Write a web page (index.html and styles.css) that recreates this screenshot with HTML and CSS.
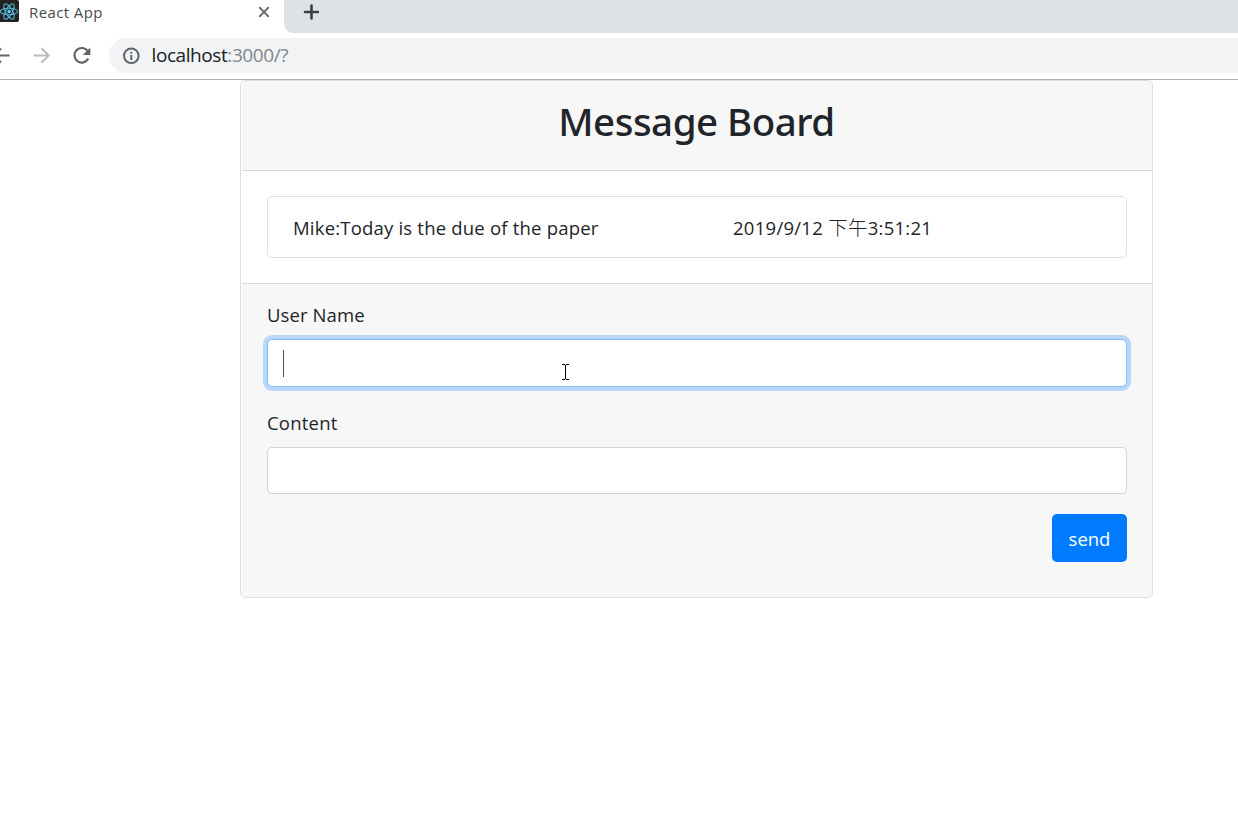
FILE: index.html
```html
<!DOCTYPE html>
<html lang="en">
<head>
<meta charset="utf-8">
<title>React App</title>
<link rel="stylesheet" href="styles.css">
</head>
<body>
<header class="browser">
  <div class="tabs">
    <div class="tab">
      <svg class="favicon" width="20" height="22" viewBox="0 0 20 22"><rect x="-4" width="23" height="22" rx="2" fill="#222"/><g fill="none" stroke="#53b5d0" stroke-width="1.1"><ellipse cx="9" cy="11.5" rx="8.7" ry="3.3"/><ellipse cx="9" cy="11.5" rx="8.7" ry="3.3" transform="rotate(60 9 11.5)"/><ellipse cx="9" cy="11.5" rx="8.7" ry="3.3" transform="rotate(120 9 11.5)"/></g><circle cx="9" cy="11.5" r="1.7" fill="#61dafb"/></svg>
      <span class="tab-title">React App</span>
      <svg class="close" width="12" height="12" viewBox="0 0 12 12"><path d="M1.2 1.2l9.6 9.6M10.8 1.2l-9.6 9.6" stroke="#5f6368" stroke-width="1.9"/></svg>
    </div>
    <div class="strip">
      <svg class="plus" width="16" height="16" viewBox="0 0 16 16"><path d="M8.500 1.500v13M2 8h13" stroke="#3c4043" stroke-width="2.600" stroke-linecap="round"/></svg>
    </div>
  </div>
  <div class="toolbar">
    <svg class="nav" width="100" height="35" viewBox="0 0 100 35"><g fill="none" stroke-width="2"><path d="M9.500 17.500H-6M1 10.500l-7 7 7 7" stroke="#5f6368"/><path d="M33.500 17.500h15M41.500 10.200l7.300 7.300-7.300 7.300" stroke="#babcbe"/><path d="M88 13.500A7.300 7.300 0 1 0 88.300 20.500" stroke="#5f6368" stroke-width="2.100"/></g><path d="M90.300 9.500v7.500h-7.500z" fill="#5f6368"/></svg>
    <div class="address">
      <svg class="info" width="18" height="18" viewBox="0 0 18 18"><circle cx="9.300" cy="8.800" r="7.300" fill="none" stroke="#5f6368" stroke-width="2"/><path d="M9.300 8v5M9.300 4.800v2" stroke="#5f6368" stroke-width="2"/></svg>
      <span class="url">localhost<span class="port">:3000/?</span></span>
    </div>
  </div>
</header>
<main class="card">
  <div class="card-header"><h1>Message Board</h1></div>
  <div class="card-body">
    <div class="message">
      <span class="message-text">Mike:Today is the due of the paper</span>
      <span class="message-time">2019/9/12 <span class="han">下午</span>3:51:21</span>
    </div>
  </div>
  <form class="card-footer">
    <label class="label-user" for="user">User Name</label>
    <div class="field">
      <input class="input focused" id="user" type="text">
      <span class="caret"></span>
      <svg class="pointer" width="9" height="18" viewBox="0 0 9 18"><path d="M1 1.500h3M5 1.500h3M4.500 2v14M1 16.500h3M5 16.500h3" stroke="#000" fill="none"/></svg>
    </div>
    <label class="label-content" for="content">Content</label>
    <input class="input" id="content" type="text">
    <button class="send" type="button">send</button>
  </form>
</main>
</body>
</html>
```
FILE: styles.css
```css
* { box-sizing: border-box; }
body {
  margin: 0;
  height: 814px;
  overflow: hidden;
  background: #fff;
  color: #212529;
  font: 400 18.5px/30px "Open Sans", "Noto Sans CJK TC", sans-serif;
}
svg { display: block; flex: none; }
.browser { height: 80px; border-bottom: 1px solid #b0b0b0; }
.tabs { display: flex; height: 33px; background: #fff; }
.tab { display: flex; width: 284px; height: 33px; }
.favicon { width: 20px; }
.tab-title { margin: 0 auto 0 9px; font-size: 15px; line-height: 25px; letter-spacing: 0.4px; color: #45494d; white-space: nowrap; }
.close { margin: 6px 14px 0 0; }
.strip { flex: 1; background: #dee1e6; border-bottom-left-radius: 9px; }
.plus { margin: 4px 0 0 19px; }
.toolbar { display: flex; height: 46px; padding-top: 5px; }
.nav { margin-right: 9px; }
.address { display: flex; align-items: center; flex: 1; height: 35px; padding-left: 13px; background: #f1f3f4; border-radius: 18px 0 0 18px; }
.url { margin: -2px 0 0 11.5px; font-size: 19px; letter-spacing: -0.42px; color: #202124; white-space: nowrap; }
.port { color: #80868b; }
.card { width: 913px; height: 518px; margin-left: 240px; border: 1px solid #dfdfdf; border-radius: 5px; overflow: hidden; }
.card-header { height: 90px; margin-left: 1px; padding: 15px 1px 0 0; background: #f7f7f7; border-bottom: 1px solid #d8d8d8; }
h1 { margin: 0; font-family: "Noto Sans", "Open Sans", sans-serif; font-size: 38.5px; font-weight: 500; line-height: 50px; letter-spacing: -0.5px; text-align: center; white-space: nowrap; }
.card-body { height: 112px; padding: 25px 25px 0 26px; }
.message { display: flex; align-items: center; height: 62px; padding: 2px 0 0 25px; border: 1px solid #dfdfdf; border-radius: 5px; letter-spacing: 0.2px; white-space: nowrap; }
.message-text { width: 440px; }
.message-time { letter-spacing: 0.27px; }
.han { font-family: "Noto Sans CJK TC", sans-serif; font-size: 19.5px; font-weight: 300; line-height: 1; }
.card-footer { display: flex; flex-direction: column; height: 315px; margin-left: 1px; padding: 16px 25px 0; background: #f7f7f7; border-top: 1px solid #d8d8d8; letter-spacing: 0.1px; }
.label-user, .label-content { height: 30px; }
.label-user { margin-bottom: 9px; }
.label-content { margin: 21px 0 9px; letter-spacing: 0.22px; }
.field { position: relative; height: 48px; }
.input { display: block; width: 100%; height: 47px; padding: 0 16px; border: 1px solid #ced4da; border-radius: 5px; background: #fff; font: inherit; outline: 0; }
.focused { height: 48px; border-color: #80bdff; box-shadow: 0 0 0 4px #b9d8f9; }
.caret { position: absolute; left: 16px; top: 11px; width: 1px; height: 27px; background: #495057; }
.pointer { position: absolute; left: 294px; top: 24px; }
.send { align-self: flex-end; width: 75px; height: 48px; margin-top: 20px; padding: 2px 0 0; border: 0; border-radius: 5px; background: #007bff; color: #fff; font: inherit; }
```
